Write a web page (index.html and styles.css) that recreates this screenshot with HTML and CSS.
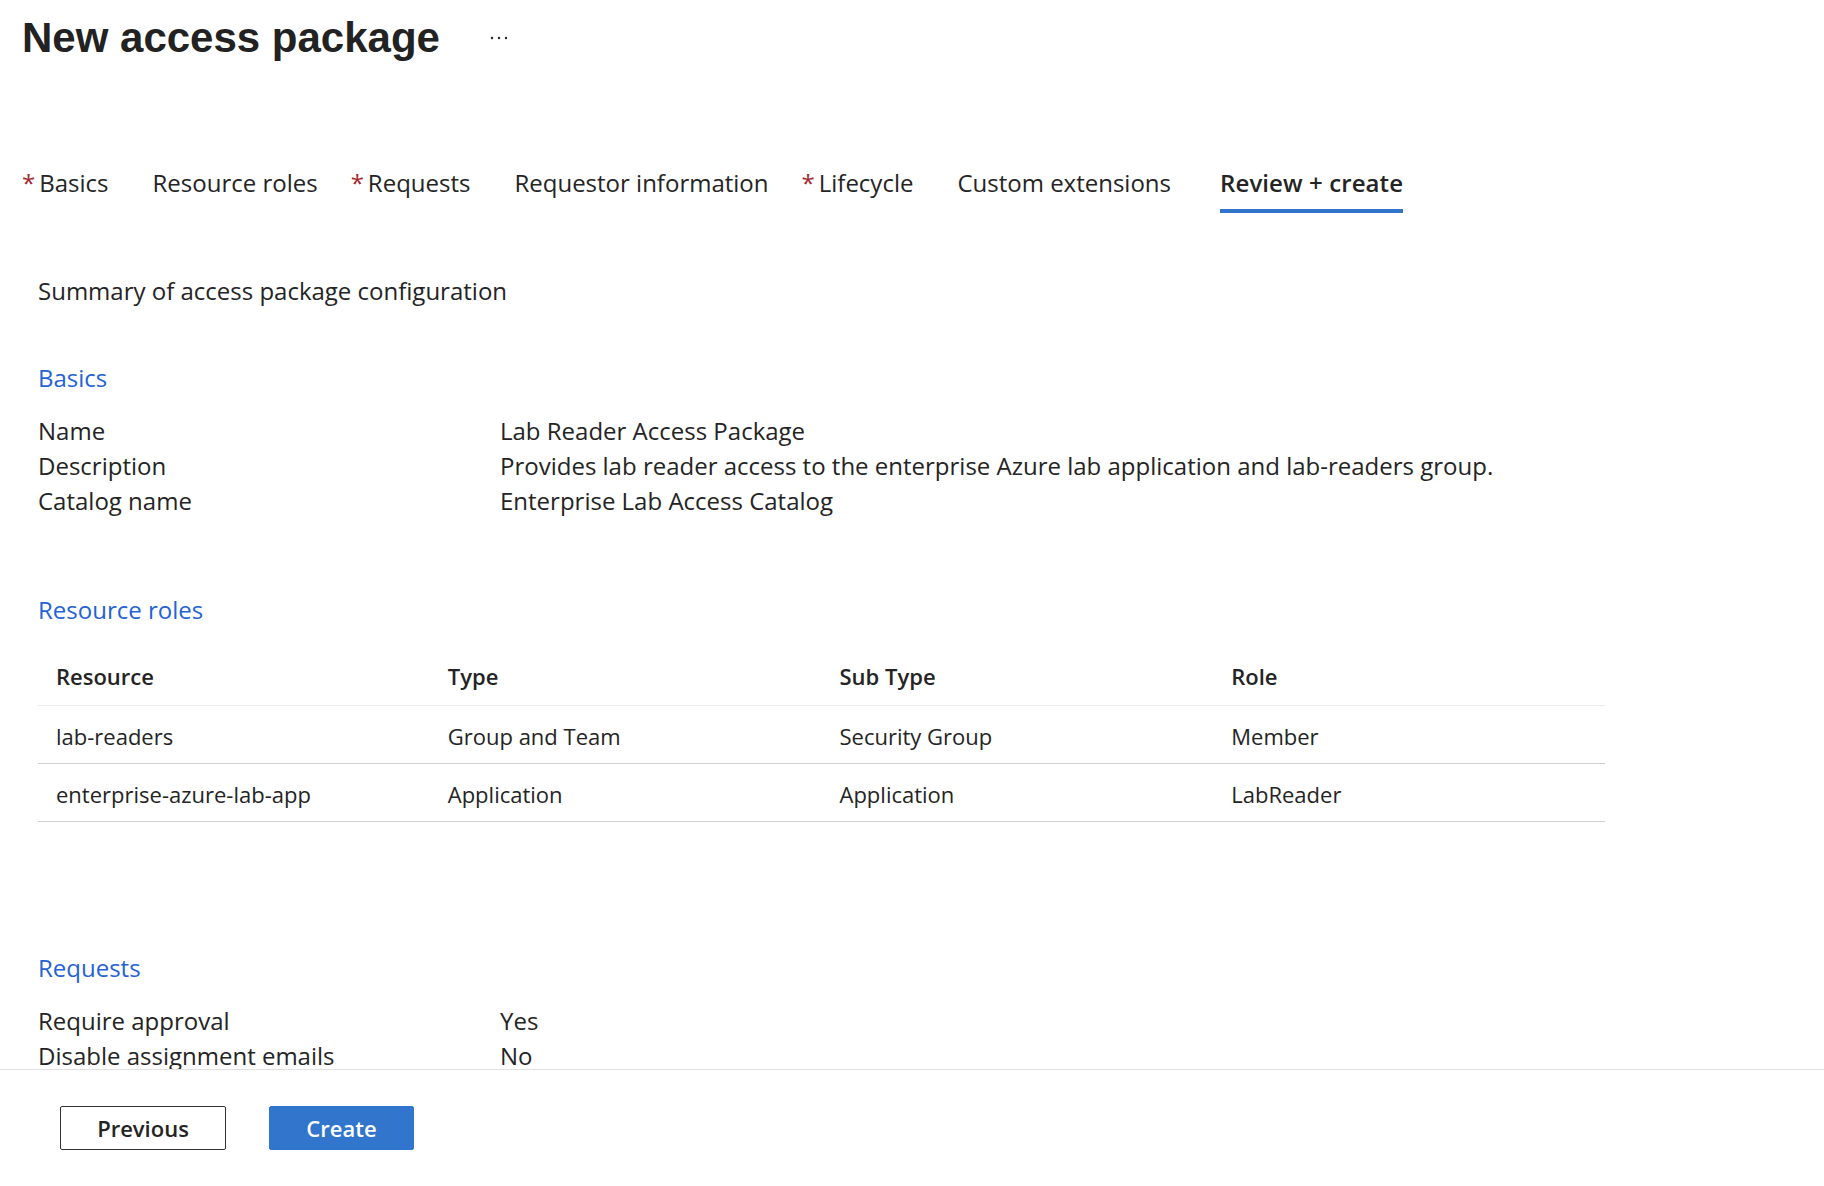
FILE: index.html
```
<!DOCTYPE html>
<html lang="en">
<head>
	<meta charset="UTF-8">
	<title>New access package</title>
	<link rel="stylesheet" href="styles.css">
</head>
<body>
	<div class="page">
		<div class="main">
			<div class="titlebar">
				<h1>New access package</h1>
				<span class="more">
					<svg width="18" height="4" viewBox="0 0 18 4"><circle cx="2" cy="2" r="1.2"/><circle cx="9" cy="2" r="1.2"/><circle cx="16" cy="2" r="1.2"/></svg>
				</span>
			</div>
			<ul class="tabs">
				<li class="star"><span class="req">*</span>Basics</li>
				<li>Resource roles</li>
				<li class="star"><span class="req">*</span>Requests</li>
				<li>Requestor information</li>
				<li class="star"><span class="req">*</span>Lifecycle</li>
				<li>Custom extensions</li>
				<li class="active">Review + create</li>
			</ul>
			<div class="content">
				<p class="summary">Summary of access package configuration</p>

				<div class="section">
					<h2>Basics</h2>
					<dl class="props">
						<div class="prop"><dt>Name</dt><dd>Lab Reader Access Package</dd></div>
						<div class="prop"><dt>Description</dt><dd>Provides lab reader access to the enterprise Azure lab application and lab-readers group.</dd></div>
						<div class="prop"><dt>Catalog name</dt><dd>Enterprise Lab Access Catalog</dd></div>
					</dl>
				</div>

				<div class="section roles">
					<h2>Resource roles</h2>
					<table class="grid">
						<thead>
							<tr><th>Resource</th><th>Type</th><th>Sub Type</th><th>Role</th></tr>
						</thead>
						<tbody>
							<tr><td>lab-readers</td><td>Group and Team</td><td>Security Group</td><td>Member</td></tr>
							<tr><td>enterprise-azure-lab-app</td><td>Application</td><td>Application</td><td>LabReader</td></tr>
						</tbody>
					</table>
				</div>

				<div class="section requests">
					<h2>Requests</h2>
					<dl class="props">
						<div class="prop"><dt>Require approval</dt><dd>Yes</dd></div>
						<div class="prop"><dt>Disable assignment emails</dt><dd>No</dd></div>
					</dl>
				</div>
			</div>
		</div>
		<div class="footer">
			<button class="btn">Previous</button>
			<button class="btn primary">Create</button>
		</div>
	</div>
</body>
</html>
```
FILE: styles.css
```
*{
	margin: 0;
	padding: 0;
	box-sizing: border-box;
}
body{
	background: #fff;
	color: #242424;
	font-family: "Open Sans", "Noto Sans", sans-serif;
	font-size: 24px;
}
.page{
	height: 1186px;
	display: flex;
	flex-direction: column;
}
.main{
	height: 1069px;
	overflow: hidden;
}
	.titlebar{
		display: flex;
		align-items: center;
		padding: 14px 0 0 22px;
	}
	.titlebar h1{
		font-family: "Liberation Sans", Arial, sans-serif;
		font-size: 42px;
		font-weight: bold;
		line-height: 48px;
		color: #222;
	}
	.more{
		display: flex;
		margin-left: 50px;
		fill: #242424;
	}
	.tabs{
		display: flex;
		gap: 44px;
		list-style: none;
		margin-top: 105px;
		padding-left: 33px;
	}
	.tabs li{
		line-height: 32px;
		padding-bottom: 10px;
		border-bottom: 4px solid transparent;
		white-space: nowrap;
	}
	.tabs li.star{
		margin-left: -11px;
	}
	.tabs li.active{
		margin-left: 5px;
		font-weight: 600;
		letter-spacing: 0.1px;
		border-bottom-color: #3274cc;
	}
	.req{
		color: #a4262c;
		margin-right: 4px;
	}
	.content{
		padding-left: 38px;
		width: 1605px;
	}
	.summary{
		margin-top: 60px;
		line-height: 35px;
	}
	.section{
		margin-top: 52px;
	}
	.section.roles{
		margin-top: 74px;
	}
	.section.requests{
		margin-top: 128px;
	}
	.section h2{
		font-size: 24px;
		font-weight: normal;
		line-height: 35px;
		color: #2462d6;
	}
	.props{
		margin-top: 18px;
	}
	.prop{
		display: flex;
		line-height: 35px;
	}
	.prop dt{
		width: 462px;
		flex-shrink: 0;
	}
	.grid{
		width: 100%;
		margin-top: 20px;
		table-layout: fixed;
		border-collapse: separate;
		border-spacing: 0;
		font-size: 22px;
	}
	.grid th{
		text-align: left;
		font-weight: 600;
		line-height: 58px;
		padding-left: 18px;
		border-bottom: 1px solid #ebebeb;
	}
	.grid td{
		line-height: 54px;
		padding: 3px 0 0 18px;
		border-bottom: 1px solid #d0d0d0;
	}
	.footer{
		flex: 1;
		border-top: 1px solid #e1e1e1;
		padding: 36px 0 0 60px;
		display: flex;
		align-items: flex-start;
		gap: 43px;
	}
	.btn{
		height: 44px;
		font-family: inherit;
		font-size: 22px;
		font-weight: 600;
		color: #242424;
		background: #fff;
		border: 1px solid #323130;
		border-radius: 2px;
		width: 166px;
	}
	.btn.primary{
		width: 145px;
		color: #fff;
		background: #3275cc;
		border-color: #3275cc;
	}
```
